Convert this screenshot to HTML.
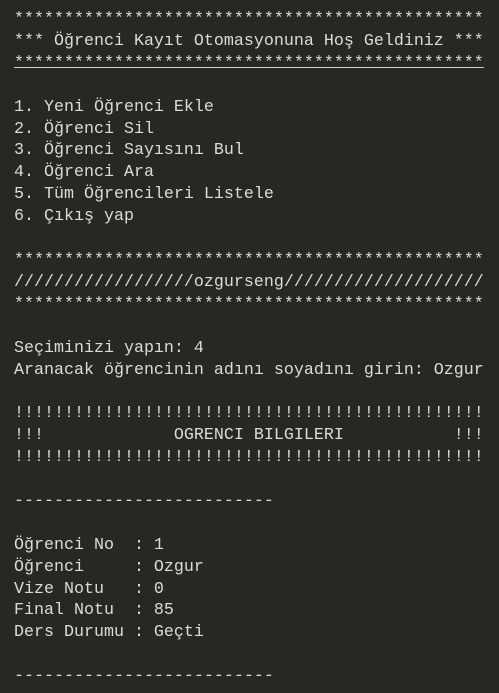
<!DOCTYPE html>
<html><head><meta charset="utf-8"><style>
html,body{margin:0;padding:0;background:#272822;width:499px;height:693px;overflow:hidden}
pre{margin:0;position:absolute;left:14px;top:9px;font-family:"Liberation Mono","DejaVu Sans Mono",monospace;font-size:16.67px;line-height:21.9px;color:#dcdcd6}
.u{position:absolute;left:14px;top:67px;width:470px;height:1px;background:#cfcfc9}
</style></head><body>
<pre>***********************************************
*** Öğrenci Kayıt Otomasyonuna Hoş Geldiniz ***
***********************************************

1. Yeni Öğrenci Ekle
2. Öğrenci Sil
3. Öğrenci Sayısını Bul
4. Öğrenci Ara
5. Tüm Öğrencileri Listele
6. Çıkış yap

***********************************************
//////////////////ozgurseng////////////////////
***********************************************

Seçiminizi yapın: 4
Aranacak öğrencinin adını soyadını girin: Ozgur

!!!!!!!!!!!!!!!!!!!!!!!!!!!!!!!!!!!!!!!!!!!!!!!
!!!             OGRENCI BILGILERI           !!!
!!!!!!!!!!!!!!!!!!!!!!!!!!!!!!!!!!!!!!!!!!!!!!!

--------------------------

Öğrenci No  : 1
Öğrenci     : Ozgur
Vize Notu   : 0
Final Notu  : 85
Ders Durumu : Geçti

--------------------------</pre>
<div class="u"></div>
</body></html>
